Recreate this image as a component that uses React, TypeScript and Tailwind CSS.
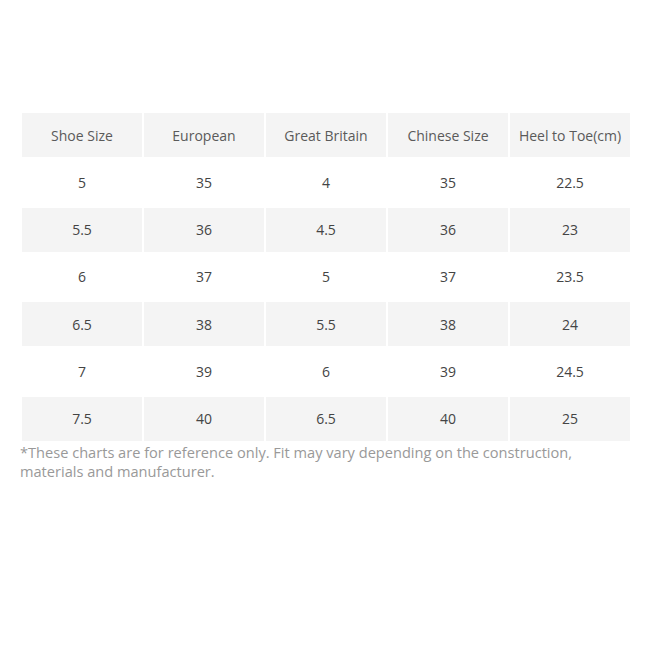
const header = ['Shoe Size', 'European', 'Great Britain', 'Chinese Size', 'Heel to Toe(cm)']

const rows = [
  ['5', '35', '4', '35', '22.5'],
  ['5.5', '36', '4.5', '36', '23'],
  ['6', '37', '5', '37', '23.5'],
  ['6.5', '38', '5.5', '38', '24'],
  ['7', '39', '6', '39', '24.5'],
  ['7.5', '40', '6.5', '40', '25'],
]

export default function App() {
  return (
    <div className="w-[650px] h-[650px] bg-white font-['Open_Sans',sans-serif] text-[14px] text-[#444]">
      <div className="pt-[113px] pl-[22px] w-[630px]">
        <div className="grid grid-cols-5 gap-x-[2px] gap-y-[3.33px]">
          {header.map(h => (
            <div key={h} className="h-[44px] bg-[#f4f4f4] flex items-center justify-center text-[#5a5a5a]">
              {h}
            </div>
          ))}
          {rows.map((r, i) =>
            r.map((c, j) => (
              <div
                key={`${i}-${j}`}
                className={`h-[44px] flex items-center justify-center ${i % 2 === 1 ? 'bg-[#f4f4f4]' : 'bg-white'}`}
              >
                {c}
              </div>
            ))
          )}
        </div>
      </div>
      <p className="pl-[20px] pr-[50px] mt-[2px] text-[14.6px] text-[#999] leading-[19px]">
        *These charts are for reference only. Fit may vary depending on the construction, materials and manufacturer.
      </p>
    </div>
  )
}
